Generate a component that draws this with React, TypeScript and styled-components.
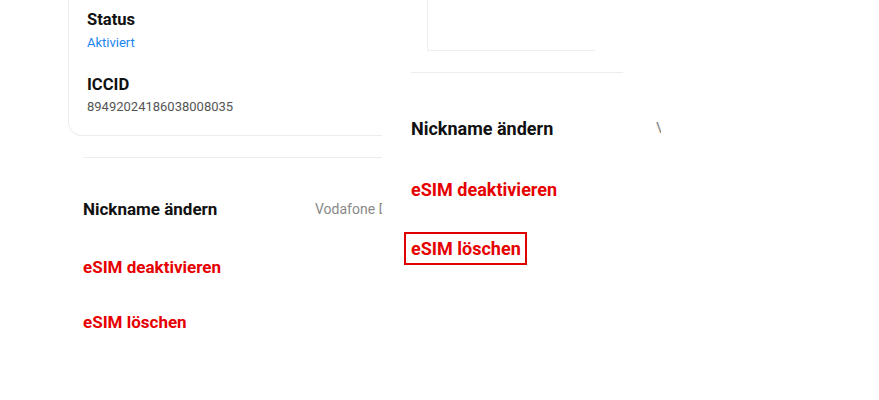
import React from "react";
import styled, { createGlobalStyle } from "styled-components";

const Global = createGlobalStyle`
  html, body { margin: 0; padding: 0; background: #fff; }
  body { font-family: Roboto, "Noto Sans", Arial, sans-serif; -webkit-font-smoothing: antialiased; }
`;

const Page = styled.div`
  display: flex;
  width: 879px;
  height: 400px;
  background: #fff;
  overflow: hidden;
`;

const Panel = styled.div<{ $w: number }>`
  width: ${(p) => p.$w}px;
  flex: none;
  height: 400px;
  overflow: hidden;
  background: #fff;
  display: flex;
  flex-direction: column;
`;

const Card = styled.div`
  margin-left: 68px;
  width: 360px;
  flex: none;
  border: 1px solid #ececec;
  border-top: none;
  border-radius: 0 0 14px 14px;
  padding: 10px 18px 19px;
  box-sizing: border-box;
`;

const SmallCard = styled.div`
  margin-left: 45px;
  width: 168px;
  height: 51px;
  flex: none;
  border: 1px solid #eeeeee;
  border-top: none;
  border-right: none;
  box-sizing: border-box;
`;

const Field = styled.div<{ $mt?: number }>`
  margin-top: ${(p) => p.$mt ?? 0}px;
  display: flex;
  flex-direction: column;
`;

const Label = styled.div`
  font-size: 16.6px;
  line-height: 20px;
  font-weight: 700;
  color: #111;
`;

const Value = styled.div<{ $color: string; $mt: number }>`
  margin-top: ${(p) => p.$mt}px;
  font-size: 13px;
  line-height: 18px;
  color: ${(p) => p.$color};
`;

const Divider = styled.div<{ $ml: number; $w: number; $mt: number }>`
  margin-left: ${(p) => p.$ml}px;
  margin-top: ${(p) => p.$mt}px;
  width: ${(p) => p.$w}px;
  height: 1px;
  flex: none;
  background: #ededed;
`;

const Row = styled.div<{ $ml: number; $h: number; $mt: number; $size: number; $col: number }>`
  margin-left: ${(p) => p.$ml}px;
  margin-top: ${(p) => p.$mt}px;
  height: ${(p) => p.$h}px;
  flex: none;
  display: grid;
  grid-template-columns: ${(p) => p.$col}px max-content;
  align-items: center;
  font-size: ${(p) => p.$size}px;
  white-space: nowrap;
`;

const RowTitle = styled.span<{ $danger?: boolean }>`
  font-weight: 700;
  color: ${(p) => (p.$danger ? "#e60000" : "#111")};
`;

const RowValue = styled.span<{ $size: number }>`
  font-size: ${(p) => p.$size}px;
  color: #8a8a8a;
`;

const Highlight = styled.span`
  justify-self: start;
  margin-left: -7px;
  border: 2px solid #e00000;
  padding: 0 4px 0 5px;
  line-height: 29px;
`;

export default function App() {
  return (
    <>
      <Global />
      <Page>
        <Panel $w={382}>
          <Card>
            <Field>
              <Label>Status</Label>
              <Value $color="#1a85f0" $mt={4}>Aktiviert</Value>
            </Field>
            <Field $mt={23}>
              <Label>ICCID</Label>
              <Value $color="#555" $mt={3}>89492024186038008035</Value>
            </Field>
          </Card>
          <Divider $ml={83} $w={320} $mt={21} />
          <Row $ml={83} $h={22} $mt={40} $size={17} $col={232}>
            <RowTitle>Nickname ändern</RowTitle>
            <RowValue $size={14}>Vodafone DE</RowValue>
          </Row>
          <Row $ml={83} $h={22} $mt={36} $size={17} $col={232}>
            <RowTitle $danger>eSIM deaktivieren</RowTitle>
          </Row>
          <Row $ml={83} $h={22} $mt={33} $size={17} $col={232}>
            <RowTitle $danger>eSIM löschen</RowTitle>
          </Row>
        </Panel>
        <Panel $w={279}>
          <SmallCard />
          <Divider $ml={29} $w={212} $mt={21} />
          <Row $ml={29} $h={24} $mt={43} $size={18} $col={245}>
            <RowTitle>Nickname ändern</RowTitle>
            <RowValue $size={15}>Vodafone DE</RowValue>
          </Row>
          <Row $ml={29} $h={24} $mt={37} $size={18} $col={245}>
            <RowTitle $danger>eSIM deaktivieren</RowTitle>
          </Row>
          <Row $ml={29} $h={34} $mt={30} $size={18} $col={245}>
            <RowTitle $danger as={Highlight}>eSIM löschen</RowTitle>
          </Row>
        </Panel>
      </Page>
    </>
  );
}
